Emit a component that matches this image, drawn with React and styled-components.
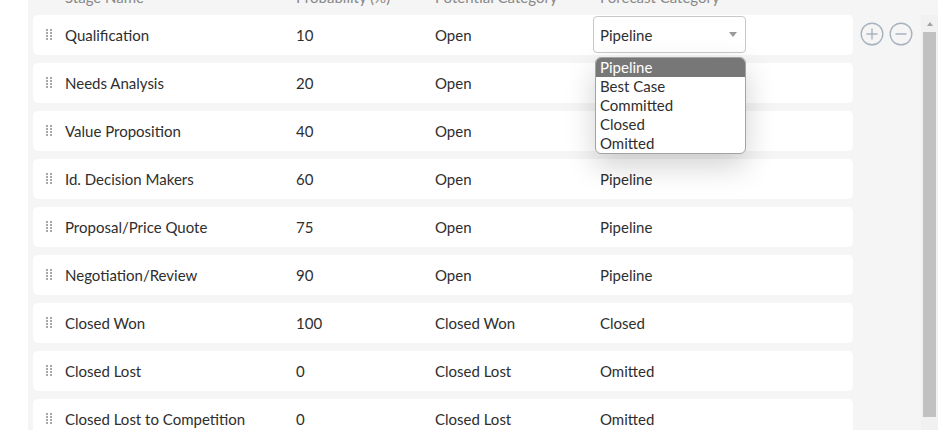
import React from "react";
import styled, { createGlobalStyle, css } from "styled-components";

const GlobalStyle = createGlobalStyle`
  html, body { margin: 0; padding: 0; background: #ffffff; overflow: hidden; }
  body { font-family: Lato, "Open Sans", Arial, sans-serif; }
`;

const columns = css`
  display: grid;
  grid-template-columns: 19px 231px 139px 158px 1fr;
  align-items: center;
  padding-left: 13px;
`;

const Page = styled.div`
  height: 430px;
  overflow: hidden;
  padding-left: 28px;
  width: 910px;
`;

const Panel = styled.div`
  background: #f5f5f5;
  margin-top: -14px;
`;

const Header = styled.div`
  ${columns}
  align-items: start;
  margin-left: 5px;
  width: 807px;
  height: 29px;
  box-sizing: border-box;
  padding-top: 2px;
  font-size: 15px;
  line-height: 18px;
  color: #888888;
`;

const HeaderCell = styled.div`
  padding-left: ${(p) => (p.$pad ? "7px" : "0")};
  white-space: nowrap;
`;

const Body = styled.div`
  display: flex;
  align-items: flex-start;
  height: 430px;
`;

const Rows = styled.div`
  display: flex;
  flex-direction: column;
  gap: 8px;
  width: 820px;
  margin-left: 5px;
`;

const Row = styled.div`
  ${columns}
  height: 40px;
  background: #ffffff;
  border-radius: 5px;
  font-size: 15px;
  line-height: 18px;
  color: #2e2e2e;
`;

const Cell = styled.div`
  white-space: nowrap;
  padding-left: ${(p) => (p.$pad ? "7px" : "0")};
`;

const Handle = styled.svg`
  display: block;
  width: 6px;
  height: 11px;
  margin-top: -1px;
`;

const SelectBox = styled.div`
  position: relative;
  width: 153px;
  height: 37px;
  box-sizing: border-box;
  border: 1px solid #c9c9c9;
  border-radius: 4px;
  padding: 0 8px 0 6px;
  display: flex;
  align-items: center;
  justify-content: space-between;
  margin-top: -1px;
  background: #ffffff;
`;

const Caret = styled.span`
  width: 0;
  height: 0;
  border-left: 4.5px solid transparent;
  border-right: 4.5px solid transparent;
  border-top: 5px solid #9a9a9a;
`;

const Dropdown = styled.ul`
  position: absolute;
  z-index: 10;
  top: calc(100% + 5px);
  left: 1px;
  width: 151px;
  box-sizing: border-box;
  margin: 0;
  padding: 0;
  list-style: none;
  background: #ffffff;
  border: 1px solid #a3a3a3;
  border-radius: 6px;
  overflow: hidden;
  box-shadow: 0 12px 30px rgba(0, 0, 0, 0.18);
`;

const Option = styled.li`
  height: 19px;
  line-height: 19px;
  padding-left: 4px;
  background: ${(p) => (p.$active ? "#777777" : "transparent")};
  color: ${(p) => (p.$active ? "#ffffff" : "#2e2e2e")};
`;

const Actions = styled.div`
  width: 68px;
  box-sizing: border-box;
  padding: 7px 0 0 7px;
  display: flex;
  gap: 5px;
`;

const IconButton = styled.svg`
  display: block;
  width: 24px;
  height: 24px;
`;

const Scrollbar = styled.div`
  width: 17px;
  height: 425px;
  background: #f1f1f1;
  display: flex;
  flex-direction: column;
  align-items: center;
`;

const ArrowButton = styled.div`
  height: 17px;
  width: 17px;
  flex: none;
  display: flex;
  align-items: center;
  justify-content: center;
`;

const Arrow = styled.span`
  width: 0;
  height: 0;
  border-left: 3.5px solid transparent;
  border-right: 3.5px solid transparent;
  ${(p) =>
    p.$down
      ? css`border-top: 4px solid #505050;`
      : css`border-bottom: 4px solid #a3a3a3;`}
`;

const Thumb = styled.div`
  width: 13px;
  height: 385px;
  background: #c1c1c1;
  flex: none;
  margin-bottom: 6px;
`;

const rows = [
  ["Qualification", "10", "Open", "Pipeline"],
  ["Needs Analysis", "20", "Open", "Pipeline"],
  ["Value Proposition", "40", "Open", "Pipeline"],
  ["Id. Decision Makers", "60", "Open", "Pipeline"],
  ["Proposal/Price Quote", "75", "Open", "Pipeline"],
  ["Negotiation/Review", "90", "Open", "Pipeline"],
  ["Closed Won", "100", "Closed Won", "Closed"],
  ["Closed Lost", "0", "Closed Lost", "Omitted"],
  ["Closed Lost to Competition", "0", "Closed Lost", "Omitted"],
];

const options = ["Pipeline", "Best Case", "Committed", "Closed", "Omitted"];

function DragHandle() {
  const dots = [];
  for (let r = 0; r < 4; r++) {
    for (let c = 0; c < 2; c++) {
      dots.push(<rect key={`${r}-${c}`} x={c * 4} y={r * 3} width="2" height="2" fill="#a8a8a8" />);
    }
  }
  return (
    <Handle viewBox="0 0 6 11">
      {dots}
    </Handle>
  );
}

function CircleIcon({ minus }) {
  return (
    <IconButton viewBox="0 0 24 24" fill="none" stroke="#a9b3be" strokeWidth="1.4" strokeLinecap="round">
      <circle cx="12" cy="12" r="10.8" />
      <line x1="7" y1="12" x2="17" y2="12" />
      {!minus && <line x1="12" y1="7" x2="12" y2="17" />}
    </IconButton>
  );
}

export default function App() {
  return (
    <>
      <GlobalStyle />
      <Page>
        <Panel>
          <Header>
            <span />
            <HeaderCell>Stage Name</HeaderCell>
            <HeaderCell>Probability (%)</HeaderCell>
            <HeaderCell>Potential Category</HeaderCell>
            <HeaderCell $pad>Forecast Category</HeaderCell>
          </Header>
          <Body>
            <Rows>
              {rows.map((r, i) => (
                <Row key={r[0]}>
                  <DragHandle />
                  <Cell>{r[0]}</Cell>
                  <Cell>{r[1]}</Cell>
                  <Cell>{r[2]}</Cell>
                  {i === 0 ? (
                    <SelectBox>
                      <span>{r[3]}</span>
                      <Caret />
                      <Dropdown>
                        {options.map((o) => (
                          <Option key={o} $active={o === "Pipeline"}>
                            {o}
                          </Option>
                        ))}
                      </Dropdown>
                    </SelectBox>
                  ) : (
                    <Cell $pad>{r[3]}</Cell>
                  )}
                </Row>
              ))}
            </Rows>
            <Actions>
              <CircleIcon />
              <CircleIcon minus />
            </Actions>
            <Scrollbar>
              <ArrowButton>
                <Arrow />
              </ArrowButton>
              <Thumb />
              <ArrowButton>
                <Arrow $down />
              </ArrowButton>
            </Scrollbar>
          </Body>
        </Panel>
      </Page>
    </>
  );
}
